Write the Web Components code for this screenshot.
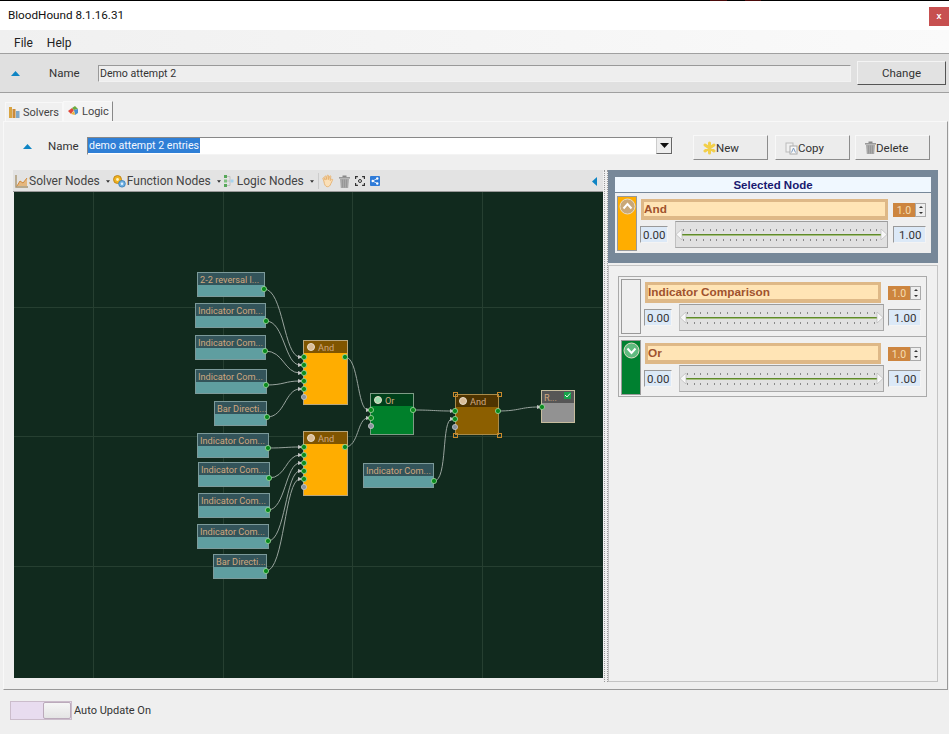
<!DOCTYPE html>
<html>
<head>
<meta charset="utf-8">
<title>BloodHound</title>
<style>
  html, body { margin: 0; padding: 0; background: #efefef; }
  body { width: 949px; height: 734px; overflow: hidden; display: flex; flex-direction: column; font-family: Roboto, "Liberation Sans", sans-serif; }
</style>
</head>
<body>
<bh-titlebar>BloodHound 8.1.16.31</bh-titlebar>
<bh-menubar></bh-menubar>
<bh-namebar></bh-namebar>
<bh-tabs></bh-tabs>
<bh-logic-pane></bh-logic-pane>
<bh-footer></bh-footer>

<script>
const TRI_UP = `<svg width="9" height="5" viewBox="0 0 9 5"><path d="M0 5 4.5 0 9 5z" fill="#0f85c4"/></svg>`;

const ICONS = {
  solvers: `<svg width="11" height="13" viewBox="0 0 11 13"><rect x="0" y="1" width="3" height="11" fill="#d9a441"/><rect x="3.500" y="3" width="3" height="9" fill="#c98b3c"/><rect x="7" y="5" width="3.500" height="7" fill="#7fa8c8"/></svg>`,
  logic: `<svg width="13" height="13" viewBox="0 0 13 13"><path d="M1 6 5 3 7 5 4 9z" fill="#e0483c"/><path d="M5 3 8 1 11 4 7 5z" fill="#6cab3f"/><path d="M7 5 11 4 11 8 8 10z" fill="#4a8ed0"/><path d="M4 9 7 6 8 10z" fill="#e7b13a"/></svg>`,
  new: `<svg width="13" height="14" viewBox="0 0 13 14"><path d="M6.500 2v10M2 4l9 6M11 4l-9 6" stroke="#f2cf4a" stroke-width="3" stroke-linecap="round"/></svg>`,
  copy: `<svg width="13" height="14" viewBox="0 0 13 14"><rect x="1" y="2" width="7" height="9" fill="#f1f1f1" stroke="#bbb"/><rect x="5" y="5" width="7" height="8" fill="#f8f8f8" stroke="#aaa"/><path d="M6.500 11.500 8.500 7l2 4.500" fill="none" stroke="#7f9cc0"/></svg>`,
  trash: `<svg width="11" height="13" viewBox="0 0 11 13"><rect x="0" y="2" width="11" height="1.600" fill="#999"/><rect x="3.500" y="0.500" width="4" height="1.600" fill="#888"/><path d="M1 4h9l-.8 9H1.800z" fill="#a9a9a9"/><path d="M3.500 4.500v8M5.500 4.500v8M7.500 4.500v8" stroke="#8f8f8f" stroke-width=".7"/></svg>`,
  chart: `<svg width="13" height="14" viewBox="0 0 13 14"><path d="M1 1v12h12" fill="none" stroke="#a89570" stroke-width="1.400"/><path d="M2 12 5 7l3 2 4-5v8z" fill="#e4b77e"/><path d="M2 12 5 7l3 2 4-5" fill="none" stroke="#cf8a3e"/></svg>`,
  func: `<svg width="13" height="13" viewBox="0 0 13 13"><circle cx="4.500" cy="4.500" r="4" fill="#eeb21f" stroke="#b77a10" stroke-width=".8"/><circle cx="4.500" cy="4.500" r="1.400" fill="#fff2c0"/><circle cx="9" cy="8.800" r="3.300" fill="#6fb0e0" stroke="#2f78b5" stroke-width=".8"/><circle cx="9" cy="8.800" r="1.200" fill="#e0f0ff"/></svg>`,
  logicnodes: `<svg width="10" height="14" viewBox="0 0 10 14"><rect x="0" y="1" width="3" height="3" fill="#58a85a"/><rect x="0" y="5.500" width="3" height="3" fill="#7fc27f"/><rect x="0" y="10" width="3" height="3" fill="#58a85a"/><path d="M3 2.500h3v4.500H3M3 11.500h3V7" fill="none" stroke="#bbb" stroke-width=".8"/><rect x="6.500" y="5.500" width="3" height="3" fill="#a6d4ee"/></svg>`,
  hand: `<svg width="12" height="14" viewBox="0 0 13 14"><path d="M2 7 1 4.500c-.4-1 .8-1.500 1.300-.6L3.500 6 3 2.400c-.1-1 1.300-1.200 1.500-.2L5.200 5.500 5.500 1.400c.1-1.100 1.500-1 1.600 0L7.200 5.500 8.200 2c.3-1 1.600-.7 1.400.4L8.800 6.500l1.400-1.300c.8-.7 1.800.2 1.100 1.100L9.600 9.800c-.7 2.400-2 3.400-3.600 3.400-2.400 0-3.400-2.200-4-6.200z" fill="#fbe0b8" stroke="#e5ad68" stroke-width=".9"/></svg>`,
  fit: `<svg width="10" height="10" viewBox="0 0 12 12"><path d="M.7 3.500V.7h2.800M8.500.7h2.800v2.800M11.300 8.500v2.800H8.500M3.500 11.300H.7V8.500" fill="none" stroke="#333" stroke-width="1.400"/><circle cx="6" cy="6" r="1.800" fill="none" stroke="#333" stroke-width="1.200"/></svg>`,
  share: `<svg width="10" height="10" viewBox="0 0 11 11"><rect width="11" height="11" rx="1" fill="#2f7bd8"/><circle cx="3" cy="5.500" r="1.300" fill="#fff"/><circle cx="8" cy="2.800" r="1.300" fill="#fff"/><circle cx="8" cy="8.200" r="1.300" fill="#fff"/><path d="M3 5.500 8 2.800M3 5.500 8 8.200" stroke="#fff" stroke-width=".8"/></svg>`
};

class BhTitlebar extends HTMLElement {
  constructor() {
    super();
    this.attachShadow({ mode: "open" });
    this.shadowRoot.innerHTML = `
    <style>
      :host { display: flex; align-items: center; justify-content: space-between; height: 29px; background: #fff; border-top: 1px solid #000; border-image: linear-gradient(90deg, #000 0 710px, #4a0a0a 710px 726px, #000 726px 744px, #4a0a0a 744px 760px, #000 760px) 1; font-size: 11.700px; color: #111; padding-left: 8px; }
      .label { margin-top: -1px; }
      .close { width: 20px; height: 19px; margin-top: 1px; background: #c75050; color: #fff; font: bold 9px "Liberation Sans", sans-serif; display: flex; align-items: center; justify-content: center; }
    </style>
    <span class="label"><slot></slot></span>
    <div class="close">x</div>`;
  }
}

class BhMenubar extends HTMLElement {
  constructor() {
    super();
    this.attachShadow({ mode: "open" });
    this.shadowRoot.innerHTML = `
    <style>
      :host { display: flex; align-items: center; gap: 14px; height: 23px; padding: 2px 0 0 14px; box-sizing: border-box; background: linear-gradient(90deg, #f0f0f0, #f6f6f6 60%, #fafafa); font-size: 12px; color: #222; }
    </style>
    <span>File</span><span>Help</span>`;
  }
}

class BhNamebar extends HTMLElement {
  constructor() {
    super();
    this.attachShadow({ mode: "open" });
    this.shadowRoot.innerHTML = `
    <style>
      :host { display: flex; align-items: center; height: 38px; background: #e0e0e0; border-top: 1px solid #a0a0a0; border-bottom: 1px solid #a0a0a0; font-size: 11.500px; color: #333; padding-left: 11px; }
      .label { margin-left: 29px; width: 49px; }
      .field { flex: 1; height: 17px; line-height: 15px; box-sizing: border-box; background: #eee; border: 1px solid #f2f2f2; border-top-color: #999; border-left-color: #999; padding-left: 1px; white-space: nowrap; font-size: 10.600px; }
      button { all: unset; box-sizing: border-box; width: 89px; height: 24px; margin: 0 3px 0 6px; text-align: center; background: #e2e2e2; border: 1px solid #f4f4f4; border-right-color: #555; border-bottom-color: #555; font-size: 11.500px; }
    </style>
    ${TRI_UP}
    <span class="label">Name</span>
    <div class="field">Demo attempt 2</div>
    <button>Change</button>`;
  }
}

class BhTabs extends HTMLElement {
  constructor() {
    super();
    this.attachShadow({ mode: "open" });
    this.shadowRoot.innerHTML = `
    <style>
      :host { display: flex; align-items: flex-end; height: 28px; padding-left: 5px; font-size: 11px; color: #444; }
      .tab { display: flex; align-items: center; gap: 3px; height: 18px; padding: 0 3px; background: #f0f0f0; border: 1px solid #f8f8f8; border-bottom: 0; }
      .on { height: 19px; gap: 2px; background: #f4f4f4; border-right: 1px solid #888; }
    </style>
    <div class="tab">${ICONS.solvers}<span>Solvers</span></div>
    <div class="tab on">${ICONS.logic}<span>Logic</span></div>`;
  }
}

class BhButton extends HTMLElement {
  constructor() {
    super();
    this.attachShadow({ mode: "open" });
    this.shadowRoot.innerHTML = `
    <style>
      :host { display: flex; align-items: center; box-sizing: border-box; width: 75px; height: 25px; padding-left: 9px; background: #ececec; border: 1px solid #f8f8f8; border-right-color: #8c8c8c; border-bottom-color: #8c8c8c; font-size: 11.500px; color: #333; }
      ::slotted(span) { display: flex; }
    </style>
    <slot name="icon"></slot><slot></slot>`;
  }
}

class BhToolbar extends HTMLElement {
  constructor() {
    super();
    this.attachShadow({ mode: "open" });
    const caret = `<svg class="caret" width="4" height="3" viewBox="0 0 5 3"><path d="M0 0h5L2.500 3z" fill="#333"/></svg>`;
    this.shadowRoot.innerHTML = `
    <style>
      :host { display: flex; align-items: center; height: 22px; padding: 1px 0 0 2px; background: #e3e3e3; border-bottom: 1px solid #999; box-sizing: border-box; font-size: 12px; color: #444; }
      .item { display: flex; align-items: center; gap: 1px; margin-right: 3px; }
      .item.l { gap: 3px; margin-right: 2px; }
      .caret { margin-left: 5px; }
      .item.l .caret { margin-left: 3px; }
      .sep { width: 1px; height: 16px; background: #ccc; margin: 0 3px 0 2px; }
      .tools { display: flex; align-items: center; gap: 5px; }
      .end { margin-left: auto; margin-right: 6px; }
    </style>
    <div class="item">${ICONS.chart}<span>Solver Nodes</span>${caret}</div>
    <div class="item">${ICONS.func}<span>Function Nodes</span>${caret}</div>
    <div class="item l">${ICONS.logicnodes}<span>Logic Nodes</span>${caret}</div>
    <div class="sep"></div>
    <div class="tools">${ICONS.hand}${ICONS.trash}${ICONS.fit}${ICONS.share}</div>
    <svg class="end" width="5" height="9" viewBox="0 0 5 9"><path d="M5 0v9L0 4.500z" fill="#0f85c4"/></svg>`;
  }
}

class BhNode extends HTMLElement {
  constructor() {
    super();
    this.attachShadow({ mode: "open" });
  }
  connectedCallback() {
    const a = (n, d) => this.getAttribute(n) || d;
    const kind = a("kind", "leaf");
    const icon = kind === "leaf" ? "" : `<span class="dot"></span>`;
    this.shadowRoot.innerHTML = `
    <style>
      :host { position: absolute; left: ${a("x")}px; top: ${a("y")}px; width: ${a("w")}px; height: ${a("h")}px; box-sizing: border-box; display: flex; flex-direction: column; border: 1px solid ${a("edge", "#7c9a9a")}; background: ${a("body", "#5f9ea0")}; font: 9.200px Roboto, "Liberation Sans", sans-serif; color: #cfa77f; }
      .head { height: ${a("hh", "12")}px; flex: none; display: flex; align-items: center; gap: 3px; padding-left: 2px; background: ${a("head", "#33545a")}; white-space: nowrap; overflow: hidden; }
      .dot { width: 8px; height: 8px; border-radius: 50%; background: ${a("dot", "#d9bd98")}; border: 1px solid #e8dcc8; box-sizing: border-box; flex: none; margin-left: 1px; }
    </style>
    <div class="head">${icon}<span>${this.textContent}</span></div>`;
  }
}

class BhGraph extends HTMLElement {
  constructor() {
    super();
    this.attachShadow({ mode: "open" });
  }
  connectedCallback() {
    const ox = 14, oy = 192;
    const leaves = [
      ["2-2 reversal l...", 197, 272, 68, 25, 264, 289],
      ["Indicator Com...", 195, 303, 71, 25, 266, 321],
      ["Indicator Com...", 195, 335, 71, 25, 265, 351],
      ["Indicator Com...", 195, 369, 72, 25, 266, 385],
      ["Bar Directi...", 214, 401, 53, 25, 267, 417],
      ["Indicator Com...", 197, 433, 72, 25, 268, 448],
      ["Indicator Com...", 198, 462, 72, 25, 269, 478],
      ["Indicator Com...", 198, 493, 72, 25, 268, 510],
      ["Indicator Com...", 197, 524, 72, 25, 268, 541],
      ["Bar Directi...", 213, 554, 54, 25, 266, 571],
      ["Indicator Com...", 363, 463, 71, 25, 434, 481]
    ];
    const links = [
      [264, 289, 303, 357], [266, 321, 303, 365], [265, 351, 303, 373], [266, 385, 303, 381], [267, 417, 303, 389],
      [268, 448, 303, 447], [269, 478, 303, 455], [268, 510, 303, 463], [268, 541, 303, 471], [266, 571, 303, 479],
      [345, 357, 371, 410], [345, 447, 371, 418], [413, 410, 455, 411], [434, 481, 455, 419], [498, 411, 542, 407]
    ];
    const curve = ([x1, y1, x2, y2]) => {
      const d = Math.max(14, (x2 - x1) / 2);
      return `<path d="M${x1 - ox} ${y1 - oy}C${x1 - ox + d} ${y1 - oy} ${x2 - ox - d} ${y2 - oy} ${x2 - ox - 3} ${y2 - oy}"/>`;
    };
    const arrow = ([, , x2, y2]) => `<path d="M${x2 - ox - 5} ${y2 - oy - 2}l5 2-5 2z" fill="#c4c4c4"/>`;
    const port = (x, y, grey) => `<circle cx="${x - ox}" cy="${y - oy}" r="2.600" fill="${grey ? "#8a94a0" : "#0a8a1e"}" stroke="${grey ? "#c8c8c8" : "#9fd49f"}" stroke-width=".8"/>`;
    const gridV = [93, 223, 352, 482].map(x => `<path d="M${x - ox + .5} 0V486"/>`).join("");
    const gridH = [307, 436, 566].map(y => `<path d="M0 ${y - oy + .5}H589"/>`).join("");
    const gates = [[303, 357, 345], [303, 447, 345]];
    let ports = "";
    gates.forEach(([x, y, ox2]) => {
      for (let i = 0; i < 6; i++) ports += port(x + 1, y + i * 8, i === 5);
      ports += port(ox2, y);
    });
    ports += port(371, 410) + port(371, 418) + port(371, 426, true) + port(413, 410);
    ports += port(455, 411) + port(455, 419) + port(455, 427, true) + port(498, 411);
    ports += port(542, 407);
    leaves.forEach(l => { ports += port(l[5], l[6]); });
    const handles = [[453, 392], [497, 392], [453, 433], [497, 433]]
      .map(([x, y]) => `<rect x="${x - ox + .5}" y="${y - oy + .5}" width="4" height="4" fill="none" stroke="#c98a2c"/>`).join("");

    this.shadowRoot.innerHTML = `
    <style>
      :host { display: block; position: relative; flex: none; width: 589px; height: 486px; margin-left: 1px; background: #112a1e; overflow: hidden; }
      svg { position: absolute; left: 0; top: 0; }
      .grid path { stroke: #263f31; fill: none; }
      .wires path { stroke: #98a39d; fill: none; stroke-width: 1; }
    </style>
    <svg width="589" height="486"><g class="grid">${gridV}${gridH}</g></svg>
    ${leaves.map(l => `<bh-node x="${l[1] - ox}" y="${l[2] - oy}" w="${l[3]}" h="${l[4]}" hh="12">${l[0]}</bh-node>`).join("")}
    <bh-node kind="gate" x="${303 - ox}" y="${340 - oy}" w="45" h="65" hh="12" body="#ffad00" head="#805500" edge="#b9a67c">And</bh-node>
    <bh-node kind="gate" x="${303 - ox}" y="${431 - oy}" w="45" h="65" hh="12" body="#ffad00" head="#805500" edge="#b9a67c">And</bh-node>
    <bh-node kind="gate" x="${370 - ox}" y="${393 - oy}" w="44" h="42" hh="12" body="#00802b" head="#00401a" edge="#7e9c86" dot="#9fdcb0">Or</bh-node>
    <bh-node kind="gate" x="${455 - ox}" y="${394 - oy}" w="44" h="41" hh="12" body="#8c5f00" head="#4f3400" edge="#a98b4a">And</bh-node>
    <bh-node x="${541 - ox}" y="${390 - oy}" w="34" h="33" hh="12" body="#929292" head="#565656" edge="#c7bd9e">R...</bh-node>
    <svg width="589" height="486" style="pointer-events:none">
      <g class="wires">${links.map(curve).join("")}</g>
      ${links.map(arrow).join("")}
      ${ports}
      ${handles}
      <rect x="${564 - ox}" y="${392 - oy}" width="7" height="7" fill="#16a34a"/>
      <path d="M${565 - ox} ${395 - oy}l2 2 3-3.500" fill="none" stroke="#e4f8e8" stroke-width="1"/>
    </svg>`;
  }
}

class BhSlider extends HTMLElement {
  constructor() {
    super();
    this.attachShadow({ mode: "open" });
    this.shadowRoot.innerHTML = `
    <style>
      :host { display: block; position: relative; box-sizing: border-box; height: 27px; flex: 1; background: #e1e1e1; border: 1px solid #a8a8a8; border-left-color: #c0c0c0; border-top-color: #9c9c9c; }
      .ticks { position: absolute; left: 7px; right: 5px; height: 2px; background: repeating-linear-gradient(90deg, #8a8a8a 0 1px, transparent 1px 6.670px); }
      .t1 { top: 7px; } .t2 { top: 17px; }
      .track { position: absolute; left: 6px; right: 6px; top: 12px; height: 1px; background: #5f8a2a; box-shadow: 0 1px 0 #a6c07e; }
      svg { position: absolute; top: 7px; }
      .l { left: 0; } .r { right: 0; }
    </style>
    <div class="ticks t1"></div><div class="ticks t2"></div><div class="track"></div>
    <svg class="l" width="7" height="11" viewBox="0 0 7 11"><path d="M6 0v11L0 5.500z" fill="#f7f7f7" stroke="#b4b4b4" stroke-width=".6"/></svg>
    <svg class="r" width="7" height="11" viewBox="0 0 7 11"><path d="M1 0v11l6-5.500z" fill="#f7f7f7" stroke="#b4b4b4" stroke-width=".6"/></svg>`;
  }
}

class BhWeightRow extends HTMLElement {
  constructor() {
    super();
    this.attachShadow({ mode: "open" });
  }
  connectedCallback() {
    const name = this.getAttribute("name");
    const strip = this.getAttribute("strip") || "#efefef";
    const chev = this.getAttribute("chev");
    const circle = chev ? `<svg width="17" height="17" viewBox="0 0 17 17"><circle cx="8.500" cy="8.500" r="7.500" fill="${chev === "up" ? "#c9a878" : "#5fbb7f"}" stroke="#e6dcc8"/><path d="${chev === "up" ? "M4.500 10.500 8.500 6l4 4.500" : "M4.500 6.500 8.500 11l4-4.500"}" fill="none" stroke="#fff" stroke-width="2"/></svg>` : "";
    this.shadowRoot.innerHTML = `
    <style>
      :host { display: grid; grid-template-columns: 20px 1fr; column-gap: 3px; box-sizing: border-box; height: 59px; padding: var(--row-pt, 2px) 5px 2px 2px; }
      .strip { height: 55px; background: ${strip}; border: 1px solid #999; box-sizing: border-box; display: flex; justify-content: center; padding-top: 1px; }
      .rows { display: flex; flex-direction: column; gap: 1px; margin-top: 3px; }
      .top, .bottom { display: flex; align-items: center; }
      .name { flex: 1; box-sizing: border-box; height: 21px; margin-left: 1px; background: #ffe4b5; border: 3px solid #deb887; border-bottom-width: 4px; font: bold 11.800px/14px "Liberation Sans", sans-serif; color: #a0522d; }
      .spin { width: 33px; height: 14px; margin-left: var(--spin-gap, 7px); display: flex; background: #cd853f; color: #f5deb3; font-size: 10.500px; line-height: 15px; box-sizing: border-box; }
      .spin span { flex: 1; text-align: center; }
      .arrows { width: 11px; display: flex; flex-direction: column; justify-content: space-between; background: #eee; border: 1px solid #aaa; box-sizing: border-box; align-items: center; padding: 2px 0; }
      .arrows i { display: block; width: 0; height: 0; border: 2px solid transparent; }
      .arrows .u { border-top: 0; border-bottom: 2px solid #333; }
      .arrows .d { border-bottom: 0; border-top: 2px solid #333; }
      .val { width: 28px; height: 17px; line-height: 16px; box-sizing: border-box; background: #dce9f7; border: 1px solid #f4f4f4; border-top-color: #999; border-left-color: #999; padding-left: 2px; font-size: 11.500px; color: #333; }
      .bottom bh-slider { margin: 0 var(--slider-r, 4px) 0 7px; }
      .max { width: 33px; padding-left: 5px; }
    </style>
    <div class="strip">${circle}</div>
    <div class="rows">
      <div class="top"><div class="name">${name}</div>
        <div class="spin"><span>1.0</span><div class="arrows"><i class="u"></i><i class="d"></i></div></div></div>
      <div class="bottom"><div class="val">0.00</div><bh-slider></bh-slider><div class="val max">1.00</div></div>
    </div>`;
  }
}

class BhSelectedPanel extends HTMLElement {
  constructor() {
    super();
    this.attachShadow({ mode: "open" });
    this.shadowRoot.innerHTML = `
    <style>
      :host { display: block; box-sizing: border-box; height: 93px; padding: 7px; background: #778899; }
      .title { height: 15px; background: #f0f8ff; text-align: center; font: bold 11.500px/17px "Liberation Sans", sans-serif; color: #191970; margin-bottom: 1px; }
      .body { background: #efefef; height: 60px; }
      bh-weight-row { height: 60px; --row-pt: 3px; --spin-gap: 5px; --slider-r: 5px; }
    </style>
    <div class="title">Selected Node</div>
    <div class="body"><bh-weight-row name="And" strip="#ffad00" chev="up"></bh-weight-row></div>`;
  }
}

class BhWeightList extends HTMLElement {
  constructor() {
    super();
    this.attachShadow({ mode: "open" });
    this.shadowRoot.innerHTML = `
    <style>
      :host { display: block; flex: 1; box-sizing: border-box; margin-top: 2px; border: 1px solid #c4c4c4; background: #f0f0f0; padding: 10px 10px 0 9px; }
      .list { border: 1px solid #aaa; }
      bh-weight-row + bh-weight-row { border-top: 1px solid #aaa; height: 60px; --row-pt: 3px; }
    </style>
    <div class="list">
      <bh-weight-row name="Indicator Comparison"></bh-weight-row>
      <bh-weight-row name="Or" strip="#008030" chev="down"></bh-weight-row>
    </div>`;
  }
}

class BhLogicPane extends HTMLElement {
  constructor() {
    super();
    this.attachShadow({ mode: "open" });
    this.shadowRoot.innerHTML = `
    <style>
      :host { display: flex; flex-direction: column; box-sizing: border-box; height: 569px; margin: 0 1px 0 3px; padding: 13px 8px 7px 10px; border-top: 1px solid #f8f8f8; border-left: 1px solid #f8f8f8; border-right: 1px solid #999; border-bottom: 1px solid #999; font-size: 11.500px; color: #333; }
      .name { display: flex; align-items: center; height: 25px; box-sizing: border-box; padding: 0 0 3px 9px; }
      .name .lbl { margin-left: 16px; width: 39px; }
      .combo { flex: 0 0 586px; height: 18px; box-sizing: border-box; display: flex; background: #fff; border: 1px solid #f4f4f4; border-top-color: #888; border-left-color: #888; font-size: 10.600px; }
      .combo .txt { flex: 1; line-height: 16px; }
      .combo mark { background: #2f7fd6; color: #f4f8ff; padding: 1px; }
      .combo .dd { width: 16px; background: #eee; border-left: 1px solid #ccc; border-right: 1px solid #666; border-bottom: 1px solid #666; display: flex; align-items: center; justify-content: center; box-sizing: border-box; }
      .btns { display: flex; gap: 5px; margin-left: 20px; align-self: flex-start; }
      .btns bh-button:first-child { margin-right: 2px; }
      .main { display: flex; flex: 1; margin-top: 10px; }
      .left { display: flex; flex-direction: column; width: 590px; margin-left: -1px; }
      .gutter { width: 4px; margin-left: 1px; border-left: 1px dotted #999; border-right: 1px dotted #999; box-sizing: border-box; }
      .right { display: flex; flex-direction: column; width: 330px; }
    </style>
    <div class="name">
      ${TRI_UP}
      <span class="lbl">Name</span>
      <div class="combo"><div class="txt"><mark>demo attempt 2 entries</mark></div>
        <div class="dd"><svg width="9" height="5" viewBox="0 0 9 5"><path d="M0 0h9L4.500 5z" fill="#111"/></svg></div></div>
      <div class="btns">
        <bh-button><span slot="icon">${ICONS.new}</span>New</bh-button>
        <bh-button><span slot="icon">${ICONS.copy}</span>Copy</bh-button>
        <bh-button><span slot="icon">${ICONS.trash}</span>Delete</bh-button>
      </div>
    </div>
    <div class="main">
      <div class="left"><bh-toolbar></bh-toolbar><bh-graph></bh-graph></div>
      <div class="gutter"></div>
      <div class="right"><bh-selected-panel></bh-selected-panel><bh-weight-list></bh-weight-list></div>
    </div>`;
  }
}

class BhFooter extends HTMLElement {
  constructor() {
    super();
    this.attachShadow({ mode: "open" });
    this.shadowRoot.innerHTML = `
    <style>
      :host { display: flex; align-items: center; height: 44px; padding-left: 10px; padding-bottom: 4px; box-sizing: border-box; gap: 2px; font-size: 11px; color: #333; }
      .toggle { display: flex; width: 62px; height: 19px; box-sizing: border-box; border: 1px solid #cbbccb; background: #e8dcef; justify-content: flex-end; }
      .knob { width: 28px; border-radius: 2px; background: linear-gradient(#f6f6f6, #e4e4e4); border: 1px solid #bbaabb; box-sizing: border-box; }
    </style>
    <div class="toggle"><div class="knob"></div></div>
    <span>Auto Update On</span>`;
  }
}

customElements.define("bh-titlebar", BhTitlebar);
customElements.define("bh-menubar", BhMenubar);
customElements.define("bh-namebar", BhNamebar);
customElements.define("bh-tabs", BhTabs);
customElements.define("bh-button", BhButton);
customElements.define("bh-toolbar", BhToolbar);
customElements.define("bh-node", BhNode);
customElements.define("bh-graph", BhGraph);
customElements.define("bh-slider", BhSlider);
customElements.define("bh-weight-row", BhWeightRow);
customElements.define("bh-selected-panel", BhSelectedPanel);
customElements.define("bh-weight-list", BhWeightList);
customElements.define("bh-logic-pane", BhLogicPane);
customElements.define("bh-footer", BhFooter);
</script>
</body>
</html>
